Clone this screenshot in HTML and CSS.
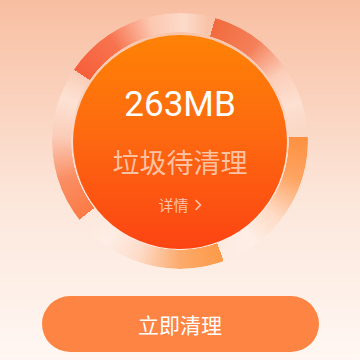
FILE: index.html
```html
<!DOCTYPE html>
<html lang="zh-CN">
<head>
    <meta charset="UTF-8">
    <meta name="viewport" content="width=device-width, initial-scale=1.0">
    <title>垃圾清理</title>
    <link rel="stylesheet" href="styles.css">
</head>
<body>
    <div class="page">
        <div class="dial">
            <div class="ring"></div>
            <div class="core">
                <div class="size">263MB</div>
                <div class="label">垃圾待清理</div>
                <div class="detail">详情
                    <svg width="8" height="12" viewBox="0 0 8 12"><path d="M2 1.5 L6.5 6 L2 10.5" fill="none" stroke="currentColor" stroke-width="1.6" stroke-linecap="round" stroke-linejoin="round"/></svg>
                </div>
            </div>
        </div>
        <button class="clean-btn">立即清理</button>
    </div>
</body>
</html>
```

FILE: styles.css
```css
html, body {
    margin: 0;
    height: 100%;
}
body {
    background: linear-gradient(#f8bea1, #fce6da 55%, #fff7f3);
    font-family: "Noto Sans CJK SC", Roboto, sans-serif;
}
.page {
    display: flex;
    flex-direction: column;
    align-items: center;
    padding-top: 13px;
}
.dial {
    position: relative;
    width: 256px;
    height: 256px;
    display: flex;
    align-items: center;
    justify-content: center;
}
.ring {
    position: absolute;
    inset: 0;
    border-radius: 50%;
    background: conic-gradient(from 304deg,
        #f6603a 0deg, #f7734f 22deg, rgba(252, 200, 178, .8) 42deg, rgba(255, 236, 226, .6) 58deg, transparent 70deg,
        transparent 72deg, #f26a3d 72deg, #f4805a 94deg, rgba(252, 205, 185, .8) 112deg, rgba(255, 236, 226, .55) 128deg, transparent 141deg,
        transparent 144deg, #fd9040 144deg, #fda462 164deg, rgba(254, 215, 190, .8) 184deg, rgba(255, 242, 234, .6) 200deg, transparent 214deg,
        transparent 216deg, #fd9a48 216deg, #fcaa6c 236deg, rgba(253, 215, 195, .8) 256deg, rgba(255, 240, 232, .55) 272deg, transparent 286deg,
        transparent 288deg, #fb7b45 288deg, #fa8e64 308deg, rgba(250, 200, 180, .8) 328deg, rgba(255, 236, 226, .6) 346deg, transparent 360deg);
    -webkit-mask: radial-gradient(circle, transparent 108.5px, #000 109px);
    mask: radial-gradient(circle, transparent 108.5px, #000 109px);
}
.core {
    position: relative;
    width: 214px;
    height: 214px;
    margin-top: 2px;
    border-radius: 50%;
    background: linear-gradient(#ff8205, #fd6a10 45%, #fc4413);
    display: flex;
    flex-direction: column;
    align-items: center;
    box-sizing: border-box;
    padding-top: 52px;
}
.size {
    font-family: Roboto, "Noto Sans", sans-serif;
    font-size: 35px;
    line-height: 35px;
    color: #fff;
}
.label {
    margin-top: 26px;
    font-size: 27px;
    line-height: 27px;
    color: rgba(255, 222, 204, .78);
}
.detail {
    margin-top: 22px;
    font-size: 15px;
    line-height: 15px;
    color: rgba(255, 222, 204, .82);
    display: flex;
    align-items: center;
    gap: 5px;
}
.clean-btn {
    margin-top: 27px;
    width: 277px;
    height: 56px;
    border: none;
    border-radius: 28px;
    background: #fe8443;
    color: #fff;
    font-family: "Noto Sans CJK SC", sans-serif;
    font-size: 21px;
    cursor: pointer;
}
```
